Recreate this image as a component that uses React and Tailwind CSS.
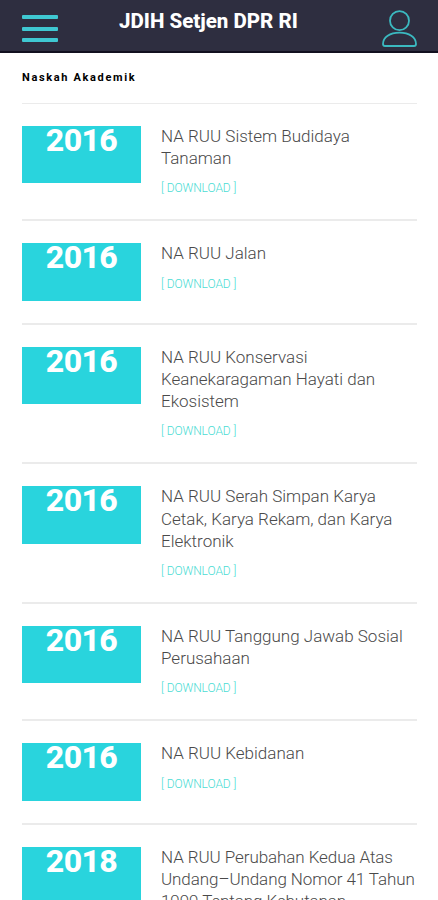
const items = [
  { year: 2016, lines: ['NA RUU Sistem Budidaya', 'Tanaman'] },
  { year: 2016, lines: ['NA RUU Jalan'] },
  { year: 2016, lines: ['NA RUU Konservasi', 'Keanekaragaman Hayati dan', 'Ekosistem'] },
  { year: 2016, lines: ['NA RUU Serah Simpan Karya', 'Cetak, Karya Rekam, dan Karya', 'Elektronik'] },
  { year: 2016, lines: ['NA RUU Tanggung Jawab Sosial', 'Perusahaan'] },
  { year: 2016, lines: ['NA RUU Kebidanan'] },
  { year: 2018, tight: true, lines: ['NA RUU Perubahan Kedua Atas', 'Undang–Undang Nomor 41 Tahun', '1999 Tentang Kehutanan'] },
];

function Header() {
  return (
    <header className="flex h-[53px] shrink-0 items-start border-b-2 border-[#12101f] bg-[#2e2e40] pl-[22px] pr-[20px]">
      <div className="mt-[15.300px] flex w-[36px] flex-col gap-[7.300px]">
        <span className="h-[4px] rounded-[1px] bg-[#3fc8d2]" />
        <span className="h-[4px] rounded-[1px] bg-[#3fc8d2]" />
        <span className="h-[4px] rounded-[1px] bg-[#3fc8d2]" />
      </div>
      <h1 className="mt-[9px] ml-[61px] text-[20.500px] leading-[24px] font-extrabold whitespace-nowrap text-white">JDIH Setjen DPR RI</h1>
      <svg className="mt-[10px] ml-auto h-[38px] w-[36px]" viewBox="0 0 36 38" fill="none" stroke="#3bb9c0" strokeWidth="1.8" strokeLinejoin="round">
        <circle cx="17.500" cy="10.700" r="9.500" />
        <path d="M1 34C1 27 8 22.600 17.500 22.600S34 27 34 34Q34 36 32 36H3Q1 36 1 34Z" />
      </svg>
    </header>
  );
}

function Item({ year, lines, tight }) {
  return (
    <article className="flex shrink-0 items-start gap-[20px] border-t-2 border-[#ebebeb] pt-[22px] pb-[22px] first:border-t">
      <div className="h-[57.400px] w-[119px] shrink-0 bg-[#29d4dd] text-center text-[32px] leading-[29px] font-extrabold tracking-[-0.600px] text-white">{year}</div>
      <div className="-mt-[1px] min-w-0 whitespace-nowrap font-light">
        <h2 className={tight ? 'text-[17px] leading-[22.200px] tracking-[-0.080px] text-[#4a4a4a]' : 'text-[17px] leading-[22.200px] text-[#4a4a4a]'}>
          {lines.map((l) => <span key={l} className="block">{l}</span>)}
        </h2>
        <a className="mt-[11px] block text-[12px] leading-[17px] tracking-[-0.080px] text-[#4bdcd4]">[ DOWNLOAD ]</a>
      </div>
    </article>
  );
}

export default function App() {
  return (
    <div className="flex h-[900px] w-[438px] flex-col overflow-hidden bg-white font-['Roboto',sans-serif]">
      <Header />
      <main className="flex flex-col px-[22px]">
        <h3 className="h-[50px] pt-[17px] text-[11px] leading-[16px] font-bold tracking-[1.650px] text-black">Naskah Akademik</h3>
        <section className="-mr-[1px] flex flex-col">
          {items.map((it) => <Item key={it.lines[0]} {...it} />)}
        </section>
      </main>
    </div>
  );
}
